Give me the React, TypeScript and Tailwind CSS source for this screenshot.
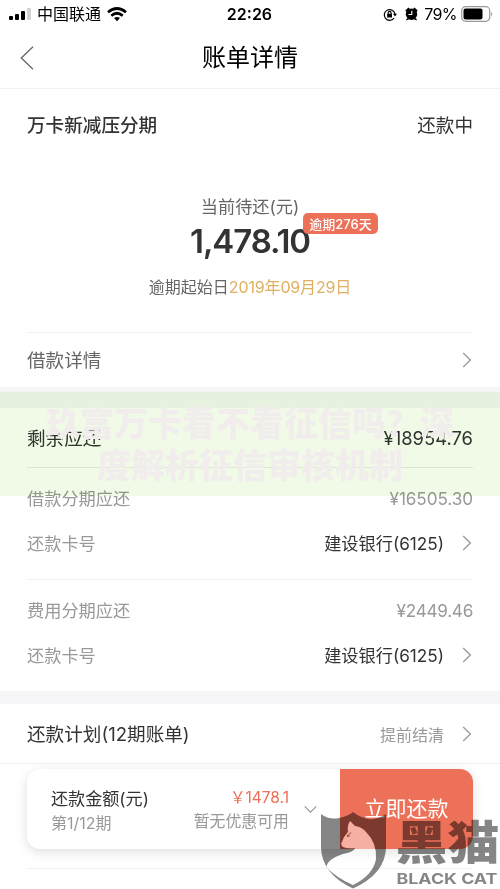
import type { ReactNode } from 'react'

interface RowProps {
  label: string
  value?: string
  arrow?: boolean
  className?: string
  labelClass?: string
  valueClass?: string
}

function Arrow() {
  return (
    <svg className="ml-[18px] h-4 w-[11px] shrink-0" viewBox="0 0 11 16" fill="none" stroke="#999" strokeWidth="1.3">
      <path d="M1.2 1 L8.4 8 L1.2 15" />
    </svg>
  )
}

function Row({ label, value, arrow, className = '', labelClass = '', valueClass = '' }: RowProps) {
  return (
    <div className={`flex items-center justify-between ${className}`}>
      <span className={`pt-0.5 ${labelClass}`}>{label}</span>
      <div className="flex items-center">
        {value && <span className={`pt-0.5 ${valueClass}`}>{value}</span>}
        {arrow && <Arrow />}
      </div>
    </div>
  )
}

function Section({ children, className = '' }: { children: ReactNode; className?: string }) {
  return <section className={`px-[27px] ${className}`}>{children}</section>
}

function StatusBar() {
  return (
    <div className="grid h-7 grid-cols-3 items-center pl-[9px] pr-[7px] text-black">
      <div className="flex items-center">
        <svg className="mr-[6px] h-3 w-[22px]" viewBox="0 0 22 12">
          <rect x="0" y="8" width="4" height="4" rx="1" />
          <rect x="6" y="6" width="4" height="6" rx="1" />
          <rect x="12" y="3" width="4" height="9" rx="1" />
          <rect x="18" y="0" width="4" height="12" rx="1" fill="#d4d4d4" />
        </svg>
        <span className="text-base">中国联通</span>
        <svg className="ml-[6px] h-[15px] w-5" viewBox="0 0 20 15" fill="none" stroke="#000" strokeWidth="2.7">
          <path d="M1 5.3 Q10 -2.3 19 5.3" />
          <path d="M4.3 8.7 Q10 3.8 15.7 8.7" />
          <path d="M7 11 Q10 8.8 13 11 L10 14.3 Z" fill="#000" stroke="none" />
        </svg>
      </div>
      <div className="pr-[3px] text-center text-base font-semibold">22:26</div>
      <div className="flex items-center justify-end">
        <svg className="mr-[8px] h-[13px] w-[14px] shrink-0" viewBox="0 0 14 13" fill="none" stroke="#000" strokeWidth="1.2">
          <path d="M11 10.2 A5.4 5.4 0 1 1 12 6" />
          <path d="M10 5.7 h4 l-2 2.8 Z" fill="#000" stroke="none" />
          <rect x="4.2" y="5.8" width="4.8" height="3.7" fill="#000" stroke="none" />
          <path d="M5.2 6 V4.8 a1.4 1.4 0 0 1 2.8 0 V6" />
        </svg>
        <svg className="mr-[6px] h-[14px] w-[13px] shrink-0" viewBox="0 0 13 14">
          <circle cx="6.5" cy="7.3" r="5.7" />
          <path d="M0.3 3.5 L3.5 0.5 L5 2 L1.5 5 Z M12.7 3.5 L9.5 0.5 L8 2 L11.5 5 Z M2 11 L1 13.5 L4 12.5 Z M11 11 L12 13.5 L9 12.5 Z" />
          <path d="M6.8 3.8 V7.5 H3.5" fill="none" stroke="#fff" strokeWidth="1.1" />
        </svg>
        <span className="text-base tracking-[-0.6px]">79%</span>
        <svg className="ml-[4px] h-4 w-[32px] shrink-0" viewBox="0 0 32 16">
          <rect x="0.7" y="0.7" width="28" height="14.6" rx="4" fill="none" stroke="#999" strokeWidth="1.2" />
          <rect x="2.5" y="2.6" width="19" height="10.8" rx="2" />
          <path d="M30.2 5.5 q2 2.5 0 5 Z" fill="#999" />
        </svg>
      </div>
    </div>
  )
}

function PayBar() {
  return (
    <div className="mx-[27px] mt-[5px] flex h-20 overflow-hidden rounded-[13px] bg-white shadow-[0_3px_12px_rgba(0,0,0,0.13)]">
      <div className="flex flex-1 items-center pl-6">
        <div className="flex-1 pt-0.5 leading-[25px]">
          <div className="text-[17.1px] text-[#333]">还款金额(元)</div>
          <div className="text-base text-[#999]">第1/12期</div>
        </div>
        <div className="pt-0.5 text-right leading-6">
          <div className="text-[15.5px] text-[#ec7058]">￥1478.1</div>
          <div className="text-[15.9px] text-[#999]">暂无优惠可用</div>
        </div>
        <svg className="ml-[15px] mr-[23px] h-[9px] w-[13px]" viewBox="0 0 13 9" fill="none" stroke="#999" strokeWidth="1.2">
          <path d="M0.7 1.3 L6.5 7.2 L12.3 1.3" />
        </svg>
      </div>
      <button className="w-[133px] bg-[#ed7058] text-[21px] text-white">立即还款</button>
    </div>
  )
}

const CAT_PATH =
  'M34 13 L39 18 Q46 19 50 24 Q61 35 60 51 Q57 67 37 77 Q21 70 10 59 Q12 51 27 46 Q38 44 39 40 Q32 41 27 39 Q24 36 26 34 Q28 28 32 24 Q31 18 34 13 Z'

// 黑猫水印
function BlackCat() {
  return (
    <svg className="absolute left-[316px] top-[808px] h-[81px] w-[184px]" viewBox="0 0 184 81">
      <path
        fill="#000"
        fillOpacity="0.48"
        fillRule="evenodd"
        d={`M5 6 Q13 12 23 10 Q32 8 37 4 Q43 9 52 11 Q62 12 70 6 V40 Q69 66 37 80.5 Q6 66 5 40 Z ${CAT_PATH}`}
      />
      <path fill="#fff" fillOpacity="0.45" d={CAT_PATH} />
      <g fill="none" stroke="#7d3b30" strokeWidth="1">
        <path d="M31 28 q1 -2 2.4 -0.6 q0 1.6 -2.4 0.6 Z" />
        <path d="M33.5 25.5 l1.6 -0.6" />
      </g>
      <g fill="#000" fillOpacity="0.48">
        <text x="79.5" y="50.5" fontSize="46" fontWeight="900" textLength="104" lengthAdjust="spacingAndGlyphs">
          黑猫
        </text>
        <text x="80.5" y="76" fontSize="15" fontWeight="700" textLength="101" lengthAdjust="spacingAndGlyphs">
          BLACK CAT
        </text>
      </g>
    </svg>
  )
}

export default function App() {
  return (
    <div className="relative h-[889px] w-[500px] overflow-hidden bg-white font-['Inter','Noto_Sans_CJK_SC',sans-serif] text-[#333]">
      <StatusBar />
      <header className="grid h-[61px] grid-cols-3 items-center border-b border-[#f1f1f1] px-5">
        <svg className="h-6 w-[14px]" viewBox="0 0 14 24" fill="none" stroke="#666" strokeWidth="1.3">
          <path d="M13 0.7 L1.3 12 L13 23.3" />
        </svg>
        <h1 className="text-center text-2xl text-black">账单详情</h1>
      </header>

      <Section className="h-[298px]">
        <Row className="h-[71px]" label="万卡新减压分期" labelClass="text-[18.6px] font-medium" value="还款中" valueClass="text-[18.6px]" />
        <div className="flex h-[173px] flex-col items-center border-b border-[#f1f1f1] pt-[35px]">
          <div className="text-[17.2px] leading-6 text-[#666]">当前待还(元)</div>
          <div className="relative mt-[2px] text-[33px] font-semibold leading-10 tracking-[-1.1px]">
            1,478.10
            <span className="absolute left-[113px] top-[-8px] flex h-[21px] w-[75px] items-center justify-center rounded-[5px] bg-[#ed7058] text-[13px] font-medium tracking-normal text-white">
              逾期276天
            </span>
          </div>
          <div className="mt-[14px] text-base leading-6 text-[#666]">
            逾期起始日<span className="tracking-[-0.15px] text-[#dfb060]">2019年09月29日</span>
          </div>
        </div>
        <Row className="h-[54px]" label="借款详情" labelClass="text-[18.6px] text-[#666]" arrow />
      </Section>

      <div className="h-[21px] bg-[#f6f6f9]" />
      <Section className="h-[283px]">
        <Row className="h-[60px] border-b border-[#eaeaea]" label="剩余应还" labelClass="text-[18.6px]" value="¥18954.76" valueClass="text-[18.4px]" />
        <Row className="h-[60px]" label="借款分期应还" labelClass="text-[17.2px] text-[#999]" value="¥16505.30" valueClass="text-[17.2px] tracking-[-0.1px] text-[#999]" />
        <Row className="h-[30px]" label="还款卡号" labelClass="text-[17.2px] text-[#999]" value="建设银行(6125)" valueClass="text-[17.2px]" arrow />
        <div className="h-[22px] border-b border-[#f1f1f1]" />
        <Row className="h-[60px]" label="费用分期应还" labelClass="text-[17.2px] text-[#999]" value="¥2449.46" valueClass="text-[17.2px] tracking-[-0.3px] text-[#999]" />
        <Row className="h-[30px]" label="还款卡号" labelClass="text-[17.2px] text-[#999]" value="建设银行(6125)" valueClass="text-[17.2px]" arrow />
      </Section>

      <div className="h-[13px] bg-[#f6f6f9]" />
      <Section className="border-b border-[#f1f1f1]">
        <Row className="h-[59px]" label="还款计划(12期账单)" labelClass="text-[18.6px]" value="提前结清" valueClass="text-base text-[#999]" arrow />
      </Section>
      <PayBar />
      <div className="mx-[27px] mt-[19px] border-t border-[#f1f1f1]" />

      {/* 标题横幅 */}
      <div className="absolute left-0 top-[392px] h-[104px] w-full bg-[#f0fae6] mix-blend-multiply" />
      <div className="absolute left-0 top-[403px] w-full text-center text-[34px] font-black leading-[42px] text-[#f2eded]">
        <div>玖富万卡看不看征信吗？深</div>
        <div>度解析征信审核机制</div>
      </div>
      <BlackCat />
    </div>
  )
}
